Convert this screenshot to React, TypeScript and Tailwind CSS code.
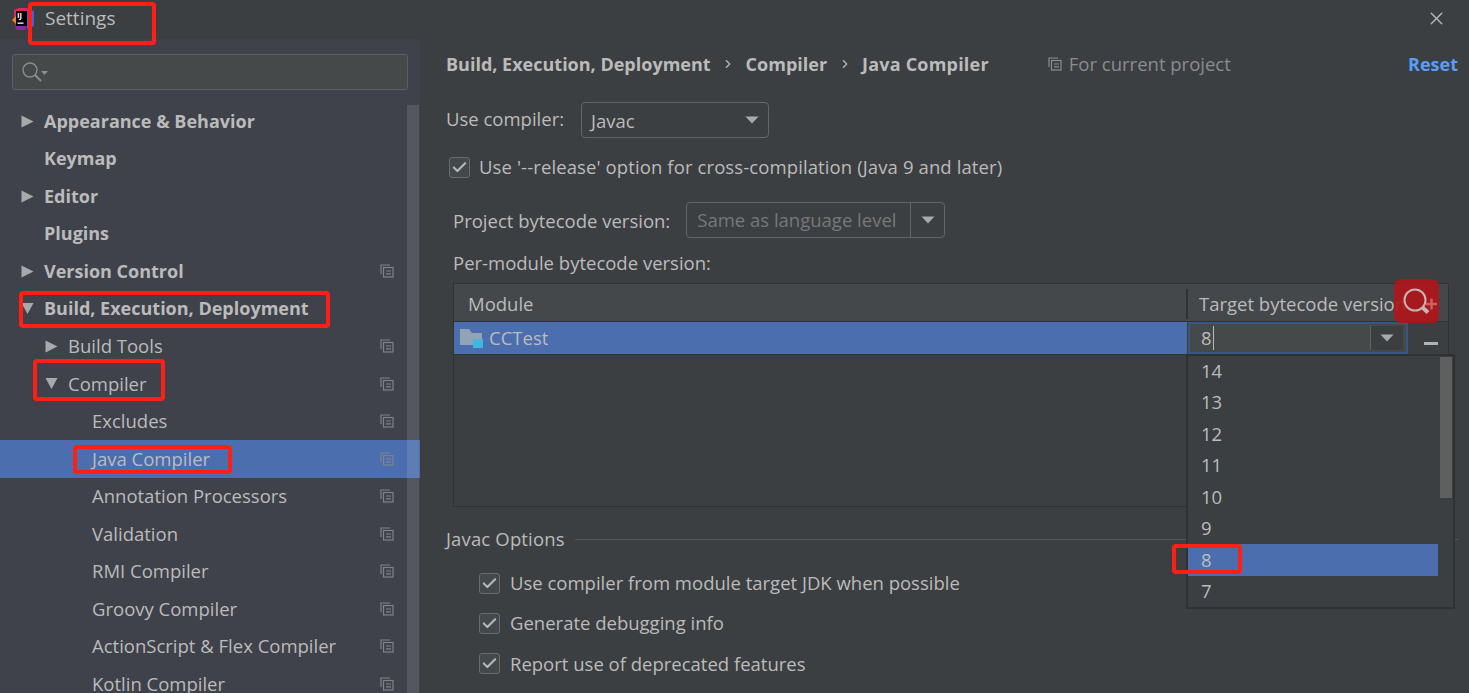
import { Check, ChevronRight, X } from "lucide-react";

const sans = "font-['Open_Sans','Noto_Sans',sans-serif]";

const tree = [
    { label: "Appearance & Behavior", depth: 0, arrow: "right", bold: true },
    { label: "Keymap", depth: 0, bold: true },
    { label: "Editor", depth: 0, arrow: "right", bold: true },
    { label: "Plugins", depth: 0, bold: true },
    { label: "Version Control", depth: 0, arrow: "right", bold: true, copy: true },
    { label: "Build, Execution, Deployment", depth: 0, arrow: "down", bold: true },
    { label: "Build Tools", depth: 1, arrow: "right", copy: true },
    { label: "Compiler", depth: 1, arrow: "down", copy: true },
    { label: "Excludes", depth: 2, copy: true },
    { label: "Java Compiler", depth: 2, copy: true, selected: true },
    { label: "Annotation Processors", depth: 2, copy: true },
    { label: "Validation", depth: 2, copy: true },
    { label: "RMI Compiler", depth: 2, copy: true },
    { label: "Groovy Compiler", depth: 2, copy: true },
    { label: "ActionScript & Flex Compiler", depth: 2, copy: true },
    { label: "Kotlin Compiler", depth: 2, copy: true },
];

const versions = ["14", "13", "12", "11", "10", "9", "8", "7"];

function Triangle({ dir }: { dir: "right" | "down" }) {
    return (
        <svg width="13" height="13" viewBox="0 0 13 13">
            {dir === "right" ? <path d="M0.5 0.5 L12.5 6.5 L0.5 12.5 Z" fill="#a7a9ab" /> : <path d="M0.5 1 L12.5 1 L6.5 12 Z" fill="#a7a9ab" />}
        </svg>
    );
}

function Caret() {
    return (
        <svg width="14" height="8" viewBox="0 0 14 8">
            <path d="M0.5 0.5 H13.5 L7 7.5 Z" fill="#a8aaac" />
        </svg>
    );
}

function CopyIcon({ color = "#7f8388" }: { color?: string }) {
    return (
        <svg width="14" height="14" viewBox="0 0 14 14" fill="none" stroke={color} strokeWidth="1.2" className="shrink-0">
            <path d="M1 10 V1 H10" />
            <rect x="3.5" y="3.5" width="9.5" height="9.5" />
            <path d="M6 7 H11 M6 9.8 H11" />
        </svg>
    );
}

function Checkbox() {
    return (
        <span className="flex h-[21px] w-[21px] shrink-0 items-center justify-center rounded-[3px] border border-[#6b6b6b] bg-[#43494a]">
            <Check size={17} strokeWidth={3} color="#b4b8bb" />
        </span>
    );
}

function Mark({ className }: { className: string }) {
    return <div className={`pointer-events-none absolute rounded-[4px] border-[4px] border-[#fe2015] ${className}`} />;
}

export default function App() {
    return (
        <div className={`relative h-[693px] w-[1469px] overflow-hidden bg-[#3c3f41] text-[18.5px] text-[#bbbbbb] ${sans}`}>
            {/* Title bar */}
            <header className="flex h-[39px] items-center bg-[#3c3f41] pl-[12px] pr-[22px]">
                <svg width="24" height="24" viewBox="0 0 24 24" className="-mt-[2px] shrink-0">
                    <path d="M2 3 L7 1 L15 1 L17 4 L4 20 L2 10 Z" fill="#e6255f" />
                    <path d="M15 3 L22 4 V19 L15 22 Z" fill="#3d63e8" />
                    <path d="M0 13 L4 9 V17 Z" fill="#f58220" />
                    <path d="M3 19 H15 L13 23 L5 23 Z" fill="#8f26a8" />
                    <rect x="4" y="4" width="11" height="15" fill="#000000" />
                    <text x="5" y="11" fontSize="7.5" fontWeight="700" fill="#ffffff">IJ</text>
                    <rect x="5.5" y="15.5" width="6" height="1.3" fill="#ffffff" />
                </svg>
                <span className="-mt-[2px] ml-[9px] text-[19px] leading-none">Settings</span>
                <X size={21} strokeWidth={1.6} color="#b4b6b8" className="-mt-[3px] ml-auto" />
            </header>

            <div className="flex h-[654px]">
                {/* Sidebar */}
                <aside className="relative w-[420px] shrink-0 overflow-hidden bg-[#3f424a]">
                    <div className="mx-[12px] mt-[15px] flex h-[36px] w-[396px] items-center rounded-[3px] border border-[#5e6060] bg-[#45494a] pl-[8px]">
                        <svg width="22" height="22" viewBox="0 0 22 22" fill="none" stroke="#8b8e90" strokeWidth="1.4">
                            <circle cx="9" cy="9" r="7" />
                            <path d="M14 14 L20 20" strokeWidth="2" />
                        </svg>
                        <svg width="7" height="4" viewBox="0 0 7 4" className="-ml-[2px] mt-[1px]">
                            <path d="M0 0 H7 L3.5 4 Z" fill="#8b8e90" />
                        </svg>
                    </div>
                    <ul className="mt-[12.5px]">
                        {tree.map((item) => (
                            <li
                                key={item.label}
                                className={`flex h-[37.5px] items-center pr-[26px] ${item.selected ? "bg-[#4b6eaf]" : ""}`}
                            >
                                <span className={`flex items-center ${item.depth === 0 ? "w-[44px] pl-[21px]" : item.depth === 1 ? "w-[68px] pl-[45px]" : "w-[92px]"}`}>
                                    {item.arrow && <Triangle dir={item.arrow as "right" | "down"} />}
                                </span>
                                <span className={item.bold ? "text-[18px] font-bold" : ""}>{item.label}</span>
                                {item.copy && <span className="ml-auto"><CopyIcon /></span>}
                            </li>
                        ))}
                    </ul>
                    <div className="absolute bottom-0 right-[1px] top-[66px] w-[12px] bg-[#d0d2d6]/15" />
                </aside>

                {/* Main panel */}
                <main className="relative flex-1 pl-[26px] pr-[11px]">
                    <div className="flex h-[50px] items-center">
                        <span className="text-[18px] font-bold">Build, Execution, Deployment</span>
                        <ChevronRight size={14} strokeWidth={2} className="mx-[10.5px]" />
                        <span className="text-[18px] font-bold">Compiler</span>
                        <ChevronRight size={14} strokeWidth={2} className="mx-[10.5px]" />
                        <span className="text-[18px] font-bold tracking-[0.2px]">Java Compiler</span>
                        <span className="ml-[59px] flex items-center gap-[7px] text-[#8a8c8e]">
                            <CopyIcon color="#8a8c8e" />
                            For current project
                        </span>
                        <span className="ml-auto text-[18px] font-bold text-[#589df6]">Reset</span>
                    </div>

                    <div className="mt-[13px] flex h-[36px] items-center">
                        <span className="pb-[2px]">Use compiler:</span>
                        <div className="ml-[17px] flex h-[36px] w-[188px] items-center justify-between rounded-[4px] border border-[#646464] pl-[9px] pr-[9px]">
                            <span className="pt-[1px]">Javac</span>
                            <Caret />
                        </div>
                    </div>

                    <label className="mt-[11px] flex h-[36px] items-center gap-[9px] pl-[3px]">
                        <Checkbox />
                        <span className="tracking-[0.11px]">Use '--release' option for cross-compilation (Java 9 and later)</span>
                    </label>

                    <div className="mt-[17px] flex h-[36px] items-center pl-[7px]">
                        <span className="pt-[1px]">Project bytecode version:</span>
                        <div className="ml-[16px] flex h-[36px] w-[259px] items-center rounded-[4px] border border-[#646464]">
                            <span className="flex-1 border-r border-[#646464] pl-[10px] leading-[34px] text-[#777879]">Same as language level</span>
                            <span className="flex w-[33px] justify-center"><Caret /></span>
                        </div>
                    </div>

                    <div className="mt-[12px] flex h-[26px] items-center pl-[7px]">Per-module bytecode version:</div>

                    {/* Module table */}
                    <div className="ml-[7px] mt-[7px] h-[224px] w-[996px] border border-[#323232]">
                        <div className="flex h-[38px] items-center border-b border-[#323232] bg-[#45484a] pt-[2px]">
                            <span className="w-[732px] pl-[14px]">Module</span>
                            <span className="h-[30px] w-[2px] bg-[#323232]" />
                            <span className="pl-[11px]">Target bytecode version</span>
                        </div>
                        <div className="flex h-[33px] border-b border-[#323232]">
                            <div className="flex w-[733px] items-center gap-[6px] bg-[#4b6eaf] pl-[6px]">
                                <svg width="23" height="21" viewBox="0 0 23 21" className="shrink-0">
                                    <path d="M0 1 H9 L12 5 H22 V17 H0 Z" fill="#93a3b6" />
                                    <rect x="13" y="11" width="10" height="9" fill="#40b6e0" />
                                </svg>
                                <span>CCTest</span>
                            </div>
                            <div className="ml-[1px] flex h-[32px] w-[220px] items-center border-2 border-[#365880] bg-[#45494a] pl-[11px]">
                                <span className="border-r border-[#bbbbbb] pr-[1px] leading-[24px]">8</span>
                                <span className="ml-auto mr-[3px] flex h-[24px] w-[33px] items-center justify-center border-l border-[#646464] bg-[#3c3f41]"><Caret /></span>
                            </div>
                            <span className="ml-[16px] mt-[20px] h-[3px] w-[14px] bg-[#b0b2b4]" />
                        </div>
                    </div>

                    <div className="mt-[19px] flex h-[26px] items-center gap-[10px]">
                        <span className="tracking-[0.15px]">Javac Options</span>
                        <span className="h-px flex-1 bg-[#55585a]" />
                    </div>

                    <ul className="ml-[33px] mt-[20px] flex flex-col gap-[18.25px]">
                        {["Use compiler from module target JDK when possible", "Generate debugging info", "Report use of deprecated features"].map((text) => (
                            <li key={text} className="flex h-[22px] items-center gap-[10px]">
                                <Checkbox />
                                <span>{text}</span>
                            </li>
                        ))}
                    </ul>
                </main>
            </div>

            {/* Version dropdown */}
            <div className="absolute left-[1186px] top-[354px] h-[255px] w-[269px] border-[2px] border-[#2f3133] bg-[#3c3f41]">
                <ul className="-mt-[1px]">
                    {versions.map((v) => (
                        <li key={v} className={`flex h-[31.5px] w-[250px] items-center pl-[13px] ${v === "8" ? "bg-[#4b6eaf]" : ""}`}>{v}</li>
                    ))}
                </ul>
                <div className="absolute right-[1px] top-[1px] h-[141px] w-[12px] bg-[#5e6060]" />
            </div>

            {/* Annotations */}
            <div className="absolute left-[1394px] top-[279px] h-[44px] w-[45px] rounded-[7px] bg-[#b0141a]/90">
                <svg width="45" height="44" viewBox="0 0 45 44" fill="none">
                    <path d="M32 25 H43 M37.5 19.5 V30.5" stroke="#d0605c" strokeWidth="2.4" />
                    <circle cx="21" cy="21" r="10.5" stroke="#c8b4b4" strokeWidth="2" />
                    <path d="M28.5 28.5 L34 33.5" stroke="#c8b4b4" strokeWidth="4" />
                </svg>
            </div>
            <Mark className="left-[28px] top-[2px] h-[43px] w-[128px]" />
            <Mark className="left-[19px] top-[291px] h-[37px] w-[311px]" />
            <Mark className="left-[33px] top-[359px] h-[42px] w-[132px]" />
            <Mark className="left-[73px] top-[445px] h-[29px] w-[159px]" />
            <Mark className="left-[1172px] top-[544px] h-[30px] w-[70px]" />
        </div>
    );
}
